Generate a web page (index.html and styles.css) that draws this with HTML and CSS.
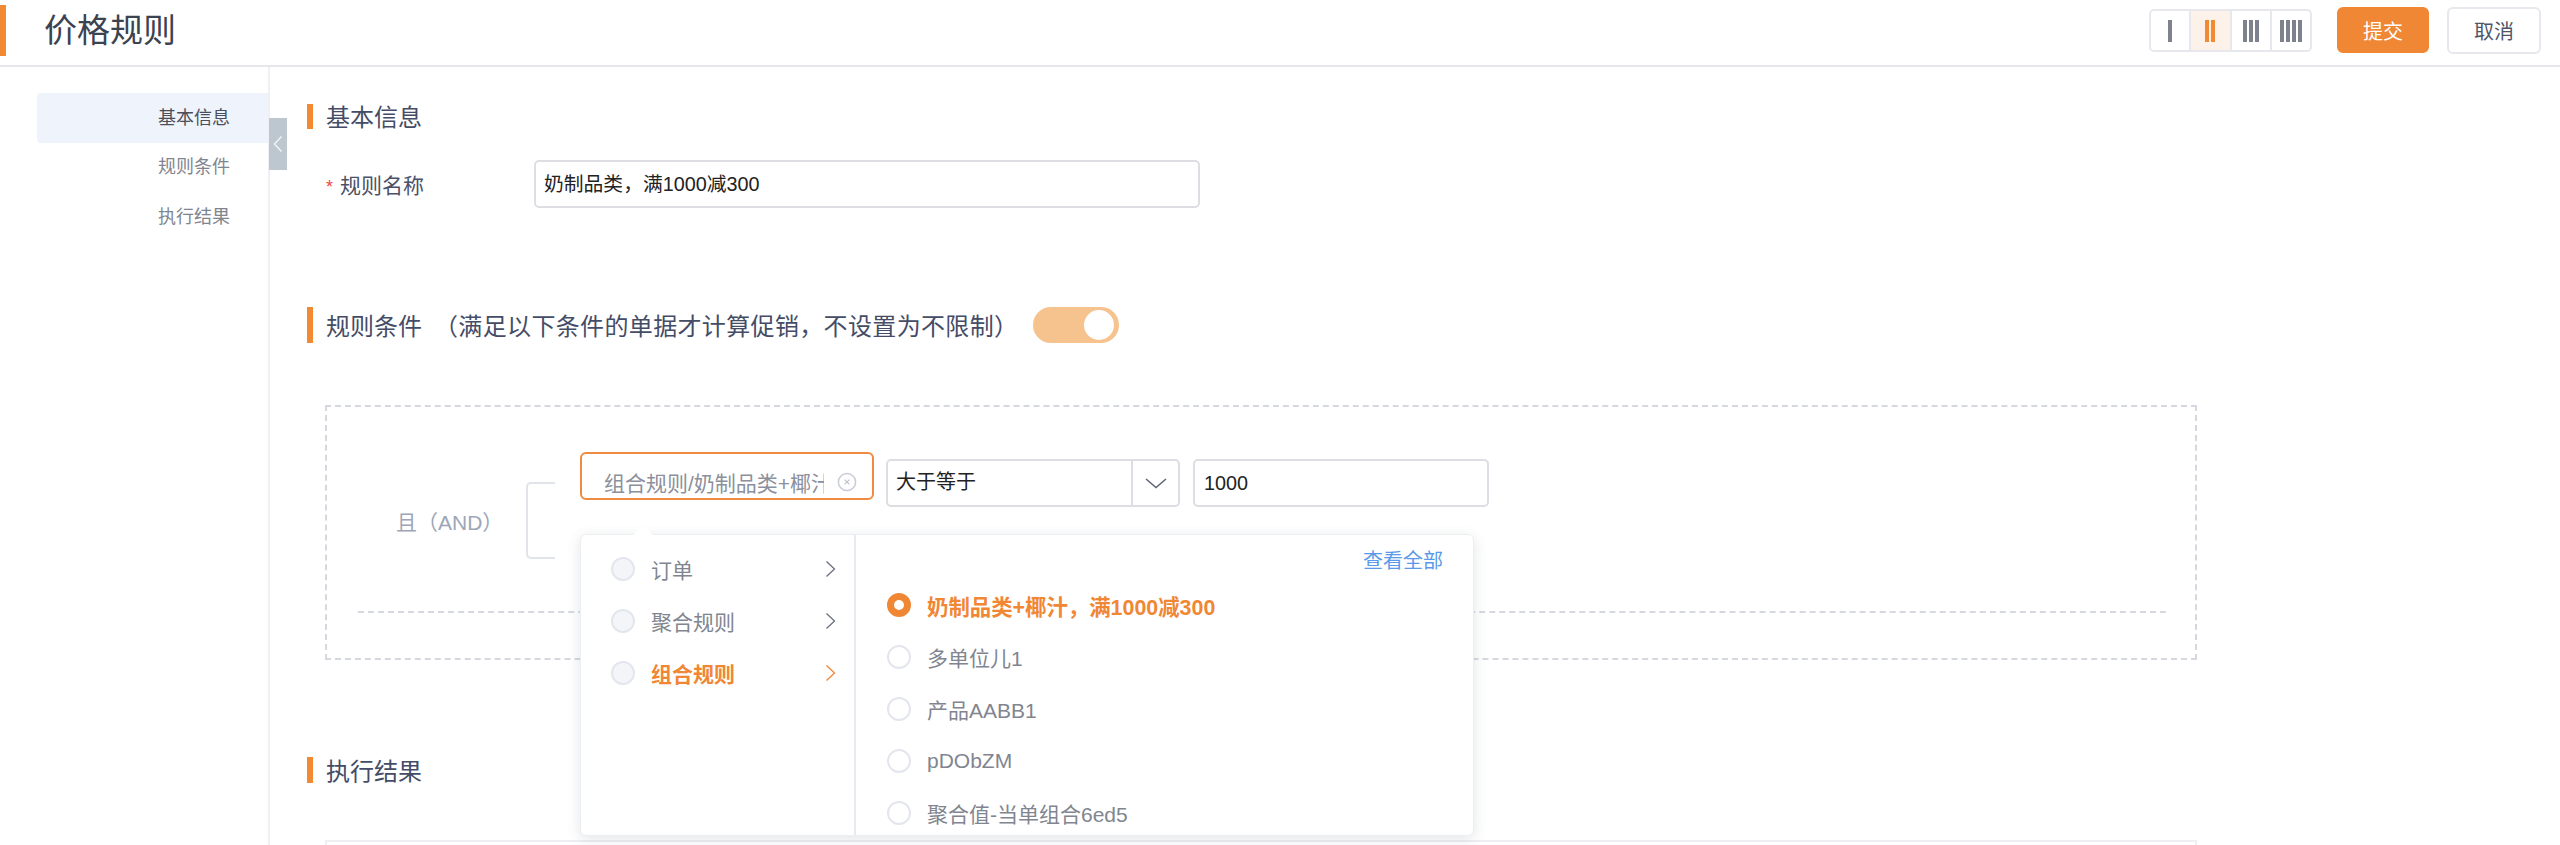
FILE: index.html
```html
<!DOCTYPE html>
<html lang="zh-CN">
<head>
<meta charset="utf-8">
<title>价格规则</title>
<link rel="stylesheet" href="styles.css">
</head>
<body>
<header class="topbar">
  <div class="title-wrap">
    <span class="title-mark"></span>
    <h1 class="title">价格规则</h1>
  </div>
  <div class="actions">
    <div class="columns">
      <div class="col-btn"><i class="bar"></i></div>
      <div class="col-btn active"><i class="bar"></i><i class="bar"></i></div>
      <div class="col-btn"><i class="bar"></i><i class="bar"></i><i class="bar"></i></div>
      <div class="col-btn"><i class="bar"></i><i class="bar"></i><i class="bar"></i><i class="bar"></i></div>
    </div>
    <button class="btn primary">提交</button>
    <button class="btn">取消</button>
  </div>
</header>
<div class="page">
  <nav class="side">
    <div class="side-item current">基本信息</div>
    <div class="side-item">规则条件</div>
    <div class="side-item">执行结果</div>
    <div class="collapse">
      <svg width="10" height="18" viewBox="0 0 10 18"><path d="M8.5 1.5 1.5 9l7 7.5" fill="none" stroke="#f2f4f6" stroke-width="1.4"/></svg>
    </div>
  </nav>
  <main class="main">
    <h2 class="heading first"><span class="heading-text">基本信息</span></h2>
    <div class="form-row">
      <label class="form-label"><span class="star">*</span>规则名称</label>
      <div class="text-input name-input">奶制品类，满1000减300</div>
    </div>
    <div class="heading-row">
      <h2 class="heading"><span class="heading-text">规则条件</span><span class="heading-note">（满足以下条件的单据才计算促销，不设置为不限制）</span></h2>
      <div class="toggle"><span class="knob"></span></div>
    </div>
    <section class="rule-box">
      <div class="rule-group">
        <div class="and-label">且（AND）</div>
        <div class="bracket"></div>
        <div class="cascader">
          <div class="cascader-field">
            <span class="cascader-text">组合规则/奶制品类+椰汁，满1000减300</span>
            <svg class="clear" width="20" height="20" viewBox="0 0 20 20"><circle cx="10" cy="10" r="8.6" fill="none" stroke="#c9ccd7" stroke-width="1.5"/><path d="M7.6 7.6l4.8 4.8M12.4 7.6l-4.8 4.8" stroke="#bfc3cf" stroke-width="1.2"/></svg>
          </div>
          <div class="popup">
            <span class="popup-arrow"></span>
            <div class="popup-left">
              <div class="cat-row"><span class="radio muted"></span><span class="cat-name">订单</span><svg class="chev" width="11" height="20" viewBox="0 0 11 20"><path d="M1.5 2.5 9.5 10l-8 7.5" fill="none" stroke="#6a7080" stroke-width="1.3"/></svg></div>
              <div class="cat-row"><span class="radio muted"></span><span class="cat-name">聚合规则</span><svg class="chev" width="11" height="20" viewBox="0 0 11 20"><path d="M1.5 2.5 9.5 10l-8 7.5" fill="none" stroke="#6a7080" stroke-width="1.3"/></svg></div>
              <div class="cat-row on"><span class="radio muted"></span><span class="cat-name">组合规则</span><svg class="chev" width="11" height="20" viewBox="0 0 11 20"><path d="M1.5 2.5 9.5 10l-8 7.5" fill="none" stroke="#f0873a" stroke-width="1.3"/></svg></div>
            </div>
            <div class="popup-right">
              <div class="view-all">查看全部</div>
              <div class="opt on"><span class="radio checked"></span>奶制品类+椰汁，满1000减300</div>
              <div class="opt"><span class="radio"></span>多单位儿1</div>
              <div class="opt"><span class="radio"></span>产品AABB1</div>
              <div class="opt"><span class="radio"></span>pDObZM</div>
              <div class="opt"><span class="radio"></span>聚合值-当单组合6ed5</div>
            </div>
          </div>
        </div>
        <div class="select">
          <span class="select-value">大于等于</span>
          <span class="select-arrow"><svg width="24" height="12" viewBox="0 0 24 12"><path d="M2 2l10 8.5L22 2" fill="none" stroke="#5d6475" stroke-width="1.5"/></svg></span>
        </div>
        <div class="text-input value-input">1000</div>
      </div>
    </section>
    <h2 class="heading result"><span class="heading-text">执行结果</span></h2>
    <div class="result-frame"></div>
  </main>
</div>
</body>
</html>
```
FILE: styles.css
```css
* { box-sizing: border-box; }
html, body { margin: 0; padding: 0; height: 845px; overflow: hidden; background: #fff; }
body { font-family: "Liberation Sans", "Noto Sans CJK SC", sans-serif; color: #222; }

.topbar { height: 67px; border-bottom: 2px solid #e6e7eb; display: flex; justify-content: space-between; align-items: flex-start; }
.title-wrap { display: flex; align-items: center; margin-top: 5px; }
.title-mark { width: 6px; height: 51px; background: #f28a34; }
.title { margin: 0 0 0 38px; font-size: 33px; line-height: 51px; font-weight: 400; color: #3b4250; }
.actions { display: flex; align-items: flex-start; margin-right: 19px; margin-top: 7px; }
.columns { display: flex; width: 163px; height: 43px; margin-top: 2px; margin-right: 25px; border: 2px solid #e6e8ee; border-radius: 5px; overflow: hidden; }
.col-btn { flex: 1; display: flex; justify-content: center; align-items: center; gap: 2px; border-left: 2px solid #e6e8ee; }
.col-btn:first-child { border-left: 0; }
.col-btn.active { background: #fdf2ea; }
.bar { width: 4px; height: 22px; background: #7e828c; }
.col-btn.active .bar { background: #f28a34; }
.btn { width: 94px; height: 47px; margin-left: 18px; border: 2px solid #e6e8ee; border-radius: 6px; background: #fff; font: 400 20px "Liberation Sans", "Noto Sans CJK SC", sans-serif; color: #4e5568; padding: 0; }
.btn.primary { width: 92px; height: 46px; margin-left: 0; background: #f08735; border-color: #f08735; color: #fff; }

.page { display: flex; height: 778px; }
.side { position: relative; width: 270px; padding: 26px 0 0 37px; border-right: 2px solid #eff0f3; }
.side-item { height: 49.5px; padding-left: 121px; font-size: 18px; line-height: 49px; color: #81858f; }
.side-item.current { height: 50px; line-height: 50px; background: #eff3fb; border-radius: 4px 0 0 4px; color: #4a4f5c; }
.collapse { position: absolute; top: 51px; left: 269px; width: 18px; height: 52px; background: #bcc7d0; display: flex; align-items: center; justify-content: center; }

.main { flex: 1; padding: 37px 363px 0 37px; }
.heading { margin: 0; display: flex; align-items: center; border-left: 6px solid #f28a34; padding-left: 13px; font-size: 24px; font-weight: 400; color: #454c66; white-space: nowrap; }
.heading-text { position: relative; top: -1px; }
.heading.first { height: 25px; }
.heading-row { display: flex; align-items: flex-start; margin-top: 99px; }
.heading-row .heading { height: 36px; }
.heading-note { margin-left: 12px; letter-spacing: .35px; position: relative; top: -1px; }
.toggle { width: 86px; height: 36px; margin-left: 15px; border-radius: 18px; background: #f6c28d; padding: 3px; display: flex; justify-content: flex-end; padding-right: 5px; }
.knob { width: 30px; height: 30px; border-radius: 50%; background: #fff; }

.form-row { display: flex; align-items: center; margin-top: 31px; padding-left: 19px; }
.form-label { width: 208px; font-size: 21px; color: #4a5168; }
.star { display: inline-block; width: 14px; color: #f0473e; font-size: 18px; }
.text-input { height: 48px; border: 2px solid #dddee3; border-radius: 5px; padding-left: 8px; font-size: 19.8px; line-height: 44px; color: #222; }
.name-input { width: 666px; }

.rule-box { height: 255px; margin: 62px 0 0 18px; padding: 45px 29px 0 31px; border: 2px dashed #d6d8e0; }
.rule-group { display: flex; align-items: flex-start; height: 161px; border-bottom: 2px dashed #d6d8e0; }
.and-label { width: 130px; margin: 57px 0 0 38px; font-size: 21px; line-height: 28px; color: #9ca6b6; white-space: nowrap; }
.bracket { width: 29px; height: 77px; margin: 30px 25px 0 0; border: 2px solid #e2e4ec; border-right: 0; border-radius: 5px 0 0 5px; }
.cascader { position: relative; width: 294px; margin-right: 12px; }
.cascader-field { height: 48px; border: 2px solid #f08a3e; border-radius: 6px; display: flex; align-items: flex-start; padding: 16px 0 0 22px; position: relative; }
.cascader-text { width: 220px; overflow: hidden; white-space: nowrap; font-size: 21px; line-height: 28px; color: #8b909c; }
.clear { position: absolute; top: 18px; right: 15px; }

.popup { position: absolute; top: 82px; left: 0; width: 894px; height: 302px; display: flex; background: #fff; border: 1px solid #eceef2; border-radius: 6px; box-shadow: 0 3px 14px rgba(60, 70, 90, .14); z-index: 5; }
.popup-arrow { position: absolute; top: -7px; left: 55px; width: 14px; height: 14px; background: #fff; transform: rotate(45deg); }
.popup-left { position: relative; width: 275px; padding-top: 8px; border-right: 2px solid #e8eaf0; }
.popup-right { flex: 1; overflow: hidden; padding: 12px 30px 0 31px; }
.cat-row { display: flex; align-items: center; height: 52px; padding-left: 30px; font-size: 21px; color: #81858f; }
.cat-name { width: 174px; margin-left: 16px; }
.cat-row.on { color: #f08735; font-weight: 700; }
.radio { flex: none; display: inline-block; width: 24px; height: 24px; border: 2px solid #e4e6ee; border-radius: 50%; background: #fff; }
.radio.muted { background: #f3f5f9; }
.radio.checked { border: 7px solid #f08735; }
.view-all { text-align: right; font-size: 20px; line-height: 28px; color: #5a9ae8; margin-bottom: 4px; }
.opt { display: flex; align-items: center; gap: 16px; height: 52px; font-size: 21px; color: #81858f; white-space: nowrap; }
.opt.on { color: #f08735; font-weight: 700; font-size: 21.4px; }

.select { display: flex; width: 294px; height: 48px; margin-top: 7px; margin-right: 13px; border: 2px solid #dddee3; border-radius: 5px; }
.select-value { width: 245px; padding-left: 8px; font-size: 20px; line-height: 42px; border-right: 2px solid #dddee3; }
.select-arrow { flex: 1; display: flex; align-items: center; justify-content: center; }
.value-input { width: 296px; margin-top: 7px; padding-left: 9px; }

.heading.result { height: 26px; margin-top: 97px; }
.result-frame { height: 5px; margin: 57px 0 0 18px; border: 2px solid #eeeff2; border-bottom: 0; }
```
